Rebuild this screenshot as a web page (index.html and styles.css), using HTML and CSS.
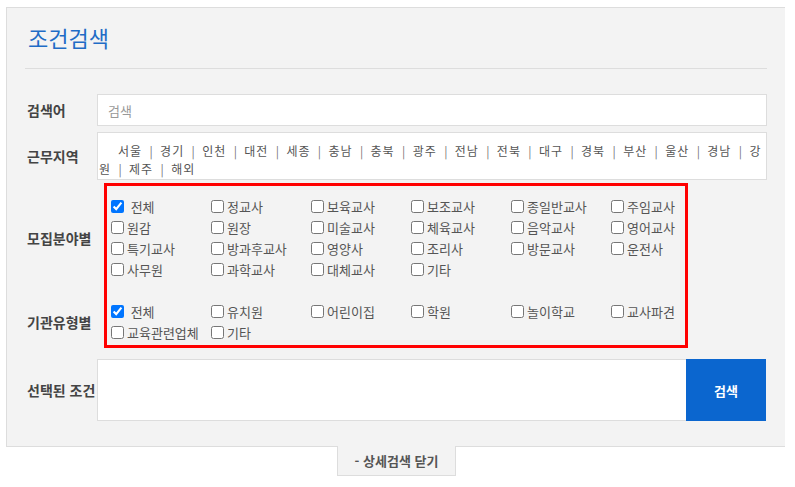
FILE: index.html
```html
<!DOCTYPE html>
<html lang="ko">
<head>
<meta charset="utf-8">
<title>조건검색</title>
<link rel="stylesheet" href="styles.css">
</head>
<body>
<div class="panel">
  <h2 class="title">조건검색</h2>

  <div class="row row-search">
    <div class="label">검색어</div>
    <input class="input" type="text" placeholder="검색">
  </div>

  <div class="row row-region">
    <div class="label">근무지역</div>
    <div class="region"><span>서울</span><span class="sep">|</span><span>경기</span><span class="sep">|</span><span>인천</span><span class="sep">|</span><span>대전</span><span class="sep">|</span><span>세종</span><span class="sep">|</span><span>충남</span><span class="sep">|</span><span>충북</span><span class="sep">|</span><span>광주</span><span class="sep">|</span><span>전남</span><span class="sep">|</span><span>전북</span><span class="sep">|</span><span>대구</span><span class="sep">|</span><span>경북</span><span class="sep">|</span><span>부산</span><span class="sep">|</span><span>울산</span><span class="sep">|</span><span>경남</span><span class="sep">|</span><span>강</span><span>원</span><span class="sep">|</span><span>제주</span><span class="sep">|</span><span>해외</span></div>
  </div>

  <div class="row row-cond">
    <div class="cond-labels">
      <div class="label l-field">모집분야별</div>
      <div class="label l-type">기관유형별</div>
    </div>
    <div class="highlight">
      <div class="cgroup">
        <label class="chk"><input type="checkbox" checked><span>&nbsp;전체</span></label>
        <label class="chk"><input type="checkbox"><span>정교사</span></label>
        <label class="chk"><input type="checkbox"><span>보육교사</span></label>
        <label class="chk"><input type="checkbox"><span>보조교사</span></label>
        <label class="chk"><input type="checkbox"><span>종일반교사</span></label>
        <label class="chk"><input type="checkbox"><span>주임교사</span></label>
        <label class="chk"><input type="checkbox"><span>원감</span></label>
        <label class="chk"><input type="checkbox"><span>원장</span></label>
        <label class="chk"><input type="checkbox"><span>미술교사</span></label>
        <label class="chk"><input type="checkbox"><span>체육교사</span></label>
        <label class="chk"><input type="checkbox"><span>음악교사</span></label>
        <label class="chk"><input type="checkbox"><span>영어교사</span></label>
        <label class="chk"><input type="checkbox"><span>특기교사</span></label>
        <label class="chk"><input type="checkbox"><span>방과후교사</span></label>
        <label class="chk"><input type="checkbox"><span>영양사</span></label>
        <label class="chk"><input type="checkbox"><span>조리사</span></label>
        <label class="chk"><input type="checkbox"><span>방문교사</span></label>
        <label class="chk"><input type="checkbox"><span>운전사</span></label>
        <label class="chk"><input type="checkbox"><span>사무원</span></label>
        <label class="chk"><input type="checkbox"><span>과학교사</span></label>
        <label class="chk"><input type="checkbox"><span>대체교사</span></label>
        <label class="chk"><input type="checkbox"><span>기타</span></label>
      </div>
      <div class="cgroup g-type">
        <label class="chk"><input type="checkbox" checked><span>&nbsp;전체</span></label>
        <label class="chk"><input type="checkbox"><span>유치원</span></label>
        <label class="chk"><input type="checkbox"><span>어린이집</span></label>
        <label class="chk"><input type="checkbox"><span>학원</span></label>
        <label class="chk"><input type="checkbox"><span>놀이학교</span></label>
        <label class="chk"><input type="checkbox"><span>교사파견</span></label>
        <label class="chk"><input type="checkbox"><span>교육관련업체</span></label>
        <label class="chk"><input type="checkbox"><span>기타</span></label>
      </div>
    </div>
  </div>

  <div class="row row-selected">
    <div class="label">선택된 조건</div>
    <div class="selected"></div>
    <button class="btn-search" type="button">검색</button>
  </div>
</div>
<div class="tab">- 상세검색 닫기</div>
</body>
</html>
```

FILE: styles.css
```css
* { box-sizing: border-box; }

body {
  margin: 0;
  background: #fff;
  color: #444;
  font-family: "Noto Sans CJK KR", "Noto Sans", sans-serif;
}

.panel {
  margin: 7px 0 0 6px;
  width: 779px;
  background: #f3f3f3;
  border: 1px solid #ddd;
  border-right: none;
  padding: 0 18px 25px;
}

.title {
  margin: 0;
  padding: 14px 0 16px 3px;
  font-size: 22px;
  line-height: 30px;
  font-weight: normal;
  color: #1f6cc6;
  border-bottom: 1px solid #ddd;
}

.row {
  display: flex;
  align-items: center;
}

.label {
  width: 72px;
  flex: none;
  padding-left: 2px;
  font-size: 14px;
  font-weight: bold;
  line-height: 18px;
  color: #444;
  white-space: nowrap;
}

.row-search { margin-top: 25px; }

.input {
  flex: 1;
  height: 32px;
  border: 1px solid #ddd;
  background: #fff;
  padding: 0 10px;
  font-family: "Noto Sans CJK KR", sans-serif;
  font-size: 13px;
  color: #333;
  outline: none;
}
.input::placeholder { color: #999; }

.row-region { margin-top: 6px; }

.region {
  flex: 1;
  height: 48px;
  border: 1px solid #ddd;
  background: #fff;
  padding: 9px 0 0 1px;
  text-indent: 19px;
  font-size: 12px;
  letter-spacing: 1px;
  line-height: 18px;
  color: #555;
  word-break: break-all;
}

.sep {
  display: inline-block;
  width: 18px;
  text-align: center;
  text-indent: 0;
  letter-spacing: 0;
  color: #777;
}

.row-cond {
  margin-top: 3px;
  align-items: flex-start;
}

.cond-labels {
  width: 72px;
  flex: none;
  padding-top: 13px;
  display: flex;
  flex-direction: column;
  gap: 21px;
}
.cond-labels .label {
  display: flex;
  align-items: center;
}
.l-field { height: 84px; }
.l-type { height: 42px; }

.highlight {
  margin-left: 7px;
  width: 584px;
  border: 3px solid #f00;
  padding: 10px 0 2px;
}

.cgroup {
  display: grid;
  grid-template-columns: repeat(5, 100px) 1fr;
  grid-auto-rows: 21px;
}
.g-type { margin-top: 21px; }

.chk {
  display: flex;
  align-items: center;
  font-size: 13px;
  line-height: 21px;
  color: #555;
  white-space: nowrap;
}
.chk input {
  margin: 0 3px 0 4px;
  width: 13px;
  height: 13px;
}

.row-selected { margin-top: 11px; }

.selected {
  flex: 1;
  height: 62px;
  background: #fff;
  border: 1px solid #ddd;
  border-right: none;
}

.btn-search {
  width: 80px;
  height: 62px;
  margin-right: 1px;
  background: #0b66cf;
  color: #fff;
  border: none;
  font-family: "Noto Sans CJK KR", sans-serif;
  font-size: 13px;
  font-weight: bold;
}

.tab {
  width: 119px;
  height: 30px;
  margin: -1px 0 0 337px;
  background: #f3f3f3;
  border: 1px solid #ddd;
  border-top: none;
  text-align: center;
  font-size: 13px;
  font-weight: bold;
  line-height: 29px;
  color: #555;
}
```
